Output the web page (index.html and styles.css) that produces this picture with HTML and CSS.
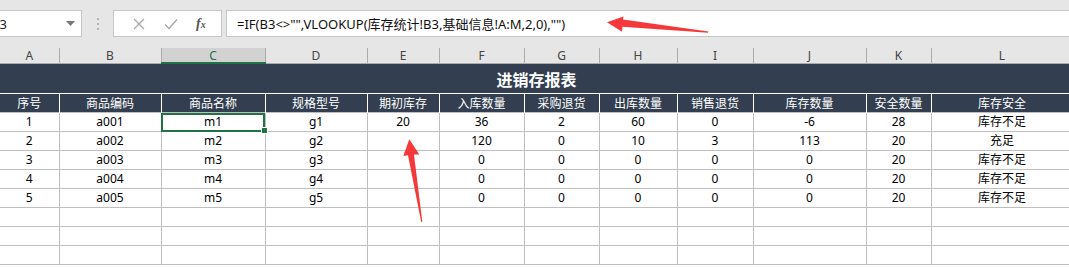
FILE: index.html
```html
<!DOCTYPE html>
<html lang="zh-CN">
<head>
    <meta charset="UTF-8">
    <title>进销存报表</title>
    <link rel="stylesheet" href="styles.css">
</head>
<body>
    <div class="formula-bar">
        <div class="name-box">
            <span>B3</span>
            <svg class="drop" width="9" height="5" viewBox="0 0 9 5"><path d="M0 0h9L4.5 5z" fill="#767676"/></svg>
        </div>
        <div class="grip"><i></i><i></i><i></i></div>
        <div class="fn-box">
            <svg width="12" height="12" viewBox="0 0 12 12"><path d="M1 1l10 10M11 1L1 11" stroke="#a6a6a6" stroke-width="1.3" fill="none"/></svg>
            <svg width="14" height="12" viewBox="0 0 14 12"><path d="M1 6.5l4 4L13 1.5" stroke="#a6a6a6" stroke-width="1.4" fill="none"/></svg>
            <span class="fx">f<sub>x</sub></span>
        </div>
        <div class="formula">=IF(B3&lt;&gt;"",VLOOKUP(库存统计!B3,基础信息!A:M,2,0),"")</div>
    </div>

    <table class="sheet">
        <colgroup>
            <col style="width:59px"><col style="width:102px"><col style="width:104px"><col style="width:102px">
            <col style="width:72px"><col style="width:85px"><col style="width:75px"><col style="width:78px">
            <col style="width:76px"><col style="width:113px"><col style="width:65px"><col style="width:142px">
        </colgroup>
        <thead>
            <tr class="letters">
                <th>A</th><th>B</th><th class="active">C</th><th>D</th><th>E</th><th>F</th>
                <th>G</th><th>H</th><th>I</th><th>J</th><th>K</th><th>L</th>
            </tr>
        </thead>
        <tbody>
            <tr class="title"><td colspan="12">进销存报表</td></tr>
            <tr class="head">
                <td>序号</td><td>商品编码</td><td>商品名称</td><td>规格型号</td><td>期初库存</td><td>入库数量</td>
                <td>采购退货</td><td>出库数量</td><td>销售退货</td><td>库存数量</td><td>安全数量</td><td>库存安全</td>
            </tr>
            <tr>
                <td>1</td><td>a001</td><td class="selected">m1</td><td>g1</td><td>20</td><td>36</td>
                <td>2</td><td>60</td><td>0</td><td>-6</td><td>28</td><td>库存不足</td>
            </tr>
            <tr>
                <td>2</td><td>a002</td><td>m2</td><td>g2</td><td></td><td>120</td>
                <td>0</td><td>10</td><td>3</td><td>113</td><td>20</td><td>充足</td>
            </tr>
            <tr>
                <td>3</td><td>a003</td><td>m3</td><td>g3</td><td></td><td>0</td>
                <td>0</td><td>0</td><td>0</td><td>0</td><td>20</td><td>库存不足</td>
            </tr>
            <tr>
                <td>4</td><td>a004</td><td>m4</td><td>g4</td><td></td><td>0</td>
                <td>0</td><td>0</td><td>0</td><td>0</td><td>20</td><td>库存不足</td>
            </tr>
            <tr>
                <td>5</td><td>a005</td><td>m5</td><td>g5</td><td></td><td>0</td>
                <td>0</td><td>0</td><td>0</td><td>0</td><td>20</td><td>库存不足</td>
            </tr>
            <tr><td></td><td></td><td></td><td></td><td></td><td></td><td></td><td></td><td></td><td></td><td></td><td></td></tr>
            <tr><td></td><td></td><td></td><td></td><td></td><td></td><td></td><td></td><td></td><td></td><td></td><td></td></tr>
            <tr><td></td><td></td><td></td><td></td><td></td><td></td><td></td><td></td><td></td><td></td><td></td><td></td></tr>
        </tbody>
    </table>

    <!-- callout arrows -->
    <svg class="marks" width="1069" height="268" viewBox="0 0 1069 268">
        <polygon points="607,22.3 623.5,16.5 623,19.5 708.5,31.5 708,32.8 622.5,26.8 622,31.8" fill="#f5393b"/>
        <polygon points="409.3,139.3 419.3,154.5 414,154.5 422.3,221.8 421.2,222 408,155.3 403.3,156" fill="#f5393b"/>
    </svg>
</body>
</html>
```

FILE: styles.css
```css
body {
    margin: 0;
    width: 1069px;
    height: 268px;
    overflow: hidden;
    position: relative;
    background: #ffffff;
    font-family: "Noto Sans", "Noto Sans CJK SC", sans-serif;
    font-size: 12px;
    color: #000;
}

/* formula bar */
.formula-bar {
    display: flex;
    align-items: flex-start;
    height: 48px;
    padding-top: 10px;
    box-sizing: border-box;
    background: #e6e6e6;
}

.name-box,
.fn-box,
.formula {
    height: 27px;
    box-sizing: border-box;
    background: #fff;
    border: 1px solid #c6c6c6;
    display: flex;
    align-items: center;
}

.name-box {
    margin-left: -14px;
    width: 96px;
    padding-left: 5px;
    justify-content: space-between;
    padding-right: 6px;
    border-left: none;
    font-size: 13px;
    color: #222;
}

.grip {
    width: 31px;
    display: flex;
    flex-direction: column;
    align-items: center;
    gap: 3px;
    padding-top: 8px;
}

.grip i {
    width: 2px;
    height: 2px;
    background: #b4b4b4;
}

.fn-box {
    width: 109px;
    justify-content: space-around;
    padding: 0 6px 0 10px;
    margin-right: 4px;
}

.fx {
    font-family: "Liberation Serif", serif;
    font-style: italic;
    font-weight: bold;
    font-size: 14px;
    color: #555;
}

.fx sub {
    font-size: 10px;
    vertical-align: 0;
}

.formula {
    flex: 1;
    border-right: none;
    padding-left: 10px;
    font-size: 13px;
    color: #111;
}

/* worksheet */
.sheet {
    border-collapse: collapse;
    table-layout: fixed;
    width: 1073px;
}

.sheet td,
.sheet th {
    padding: 0;
    text-align: center;
    white-space: nowrap;
}

.letters th {
    height: 14px;
    background: #e6e6e6;
    font-weight: normal;
    font-size: 12px;
    line-height: 12px;
    padding-top: 2px;
    box-sizing: border-box;
    color: #444;
    border-right: 1px solid #ababab;
    border-bottom: 1px solid #ababab;
}

.letters th.active {
    background: #d2d2d2;
    color: #217346;
    border-bottom: 2px solid #217346;
}

.title td {
    height: 29px;
    background: #333f50;
    color: #fff;
    font-size: 16px;
    font-weight: bold;
    border-bottom: 1px solid #fff;
}

.head td {
    height: 18px;
    background: #333f50;
    color: #fff;
    border-right: 1px solid #fff;
}

tbody tr {
    height: 19px;
}

tbody tr:not(.title):not(.head) td {
    border: 1px solid #bfbfbf;
    border-left: none;
    height: 18px;
    line-height: 18px;
}

td.selected {
    position: relative;
    outline: 2px solid #217346;
    outline-offset: -2px;
}

td.selected::after {
    content: "";
    position: absolute;
    right: -3px;
    bottom: -3px;
    width: 5px;
    height: 5px;
    background: #217346;
    border: 1px solid #fff;
}

.marks {
    position: absolute;
    left: 0;
    top: 0;
    pointer-events: none;
}
```
